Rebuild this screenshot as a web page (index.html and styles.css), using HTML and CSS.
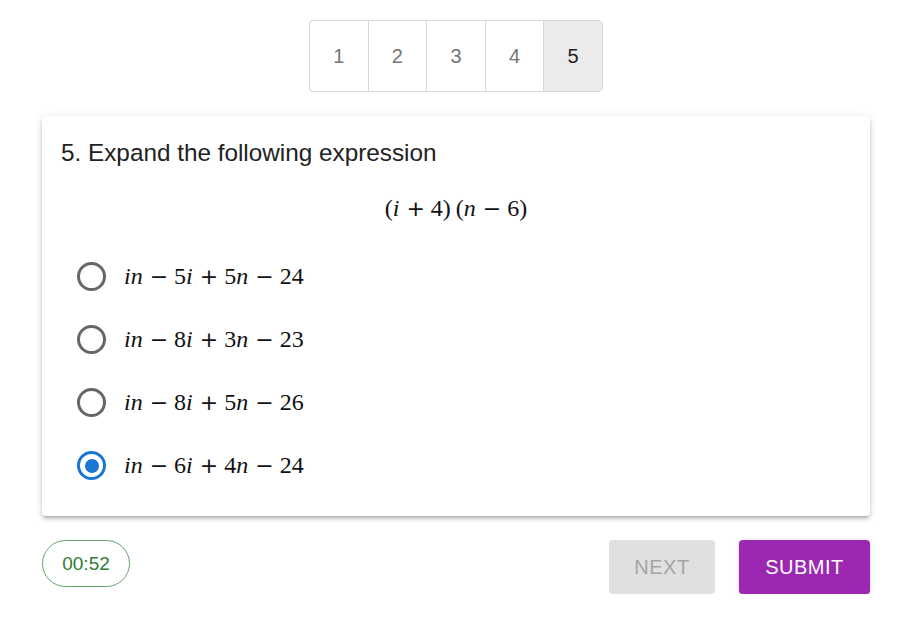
FILE: index.html
```html
<!DOCTYPE html>
<html>
<head>
<meta charset="utf-8">
<link rel="stylesheet" href="styles.css">
</head>
<body>
<div class="page">
  <div class="pager">
    <div class="cell">1</div>
    <div class="cell">2</div>
    <div class="cell">3</div>
    <div class="cell">4</div>
    <div class="cell active">5</div>
  </div>
  <div class="card">
    <div class="title">5. Expand the following expression</div>
    <div class="expr math"><span class="r">(</span><i>i</i><span class="op">+</span><span class="r">4)</span><span class="gap"></span><span class="r">(</span><i>n</i><span class="op">−</span><span class="r">6)</span></div>
    <div class="options">
      <label class="opt"><span class="radio"></span><span class="math"><i>in</i><span class="op">−</span>5<i>i</i><span class="op">+</span>5<i>n</i><span class="op">−</span>24</span></label>
      <label class="opt"><span class="radio"></span><span class="math"><i>in</i><span class="op">−</span>8<i>i</i><span class="op">+</span>3<i>n</i><span class="op">−</span>23</span></label>
      <label class="opt"><span class="radio"></span><span class="math"><i>in</i><span class="op">−</span>8<i>i</i><span class="op">+</span>5<i>n</i><span class="op">−</span>26</span></label>
      <label class="opt"><span class="radio checked"></span><span class="math"><i>in</i><span class="op">−</span>6<i>i</i><span class="op">+</span>4<i>n</i><span class="op">−</span>24</span></label>
    </div>
  </div>
  <div class="footer">
    <div class="timer">00:52</div>
    <div class="actions">
      <button class="btn next">NEXT</button>
      <button class="btn submit">SUBMIT</button>
    </div>
  </div>
</div>
</body>
</html>
```

FILE: styles.css
```css
html, body {
  margin: 0;
  padding: 0;
  background: #fff;
  font-family: "Liberation Sans", Arial, sans-serif;
  color: rgba(0,0,0,0.87);
}
.page {
  padding: 20px 35px 0 42px;
  display: flex;
  flex-direction: column;
}
.pager {
  align-self: center;
  display: flex;
  width: 294px;
  height: 72px;
  box-sizing: border-box;
  border: 1px solid #d9d9d9;
  border-radius: 4px;
  overflow: hidden;
}
.cell {
  flex: 1;
  display: flex;
  align-items: center;
  justify-content: center;
  font-size: 20px;
  color: #757575;
  border-left: 1px solid #d9d9d9;
}
.cell:first-child { border-left: none; }
.cell.active {
  background: #ebebeb;
  color: #222;
}
.card {
  margin-top: 24px;
  width: 828px;
  box-sizing: border-box;
  border-radius: 4px;
  background: #fff;
  box-shadow: 0 3px 3px -2px rgba(0,0,0,0.2), 0 3px 4px 0 rgba(0,0,0,0.14), 0 1px 8px 0 rgba(0,0,0,0.12);
  padding: 23px 19px 24px 19px;
  height: 400px;
}
.title {
  font-size: 24.3px;
  line-height: 28px;
  color: #222;
}
.math {
  font-family: "Liberation Serif", "Times New Roman", serif;
  font-size: 24px;
  color: #111;
  white-space: nowrap;
}
.math i { font-style: italic; margin-right: 1px; }
.op {
  font-family: "DejaVu Sans", sans-serif;
  font-size: 22px;
  margin: 0 6px;
}
.gap { display: inline-block; width: 5px; }
.expr {
  text-align: center;
  margin-top: 27px;
  line-height: 28px;
}
.options {
  margin-top: 22px;
  display: flex;
  flex-direction: column;
}
.opt {
  display: flex;
  align-items: center;
  height: 63px;
}
.radio {
  width: 29px;
  height: 29px;
  border: 3px solid #666;
  border-radius: 50%;
  margin-left: 16px;
  margin-right: 18px;
  box-sizing: border-box;
  position: relative;
  flex: none;
}
.radio.checked {
  border-color: #1976d2;
}
.radio.checked::after {
  content: "";
  position: absolute;
  left: 50%;
  top: 50%;
  width: 14px;
  height: 14px;
  margin: -7px 0 0 -7px;
  border-radius: 50%;
  background: #1976d2;
}
.footer {
  margin-top: 24px;
  width: 828px;
  display: flex;
  justify-content: space-between;
  align-items: flex-start;
}
.timer {
  width: 88px;
  height: 47px;
  box-sizing: border-box;
  border: 1px solid #66a36a;
  border-radius: 24px;
  color: #2e7d32;
  font-size: 19px;
  display: flex;
  align-items: center;
  justify-content: center;
}
.actions {
  display: flex;
  gap: 24px;
}
.btn {
  height: 54px;
  border: none;
  border-radius: 4px;
  font-family: "Liberation Sans", Arial, sans-serif;
  font-size: 20px;
  letter-spacing: 0.5px;
  padding: 0;
}
.next {
  width: 106px;
  background: #e0e0e0;
  color: #a6a6a6;
}
.submit {
  width: 131px;
  background: #9c27b0;
  color: #fff;
  box-shadow: 0 3px 1px -2px rgba(0,0,0,0.2), 0 2px 2px 0 rgba(0,0,0,0.14), 0 1px 5px 0 rgba(0,0,0,0.12);
}
```
